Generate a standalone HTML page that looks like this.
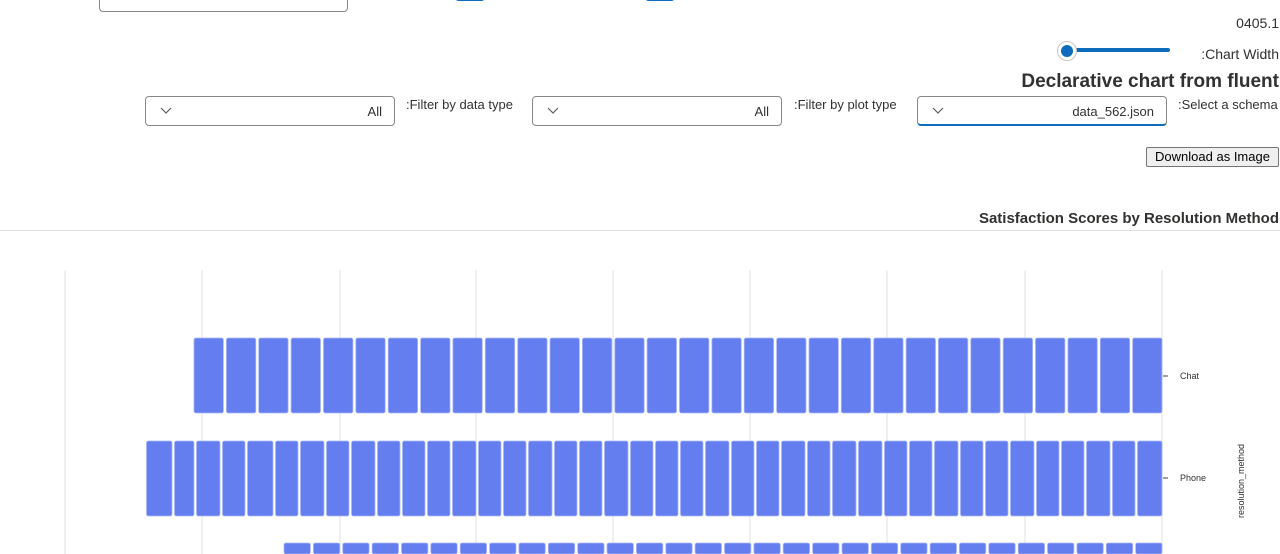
<!DOCTYPE html>
<html><head><meta charset="utf-8">
<style>
html,body{margin:0;padding:0;width:1280px;height:554px;overflow:hidden;background:#fff;font-family:"Segoe UI","Liberation Sans",sans-serif;color:#323130;}
.abs{position:absolute;}
.dd{position:absolute;height:30px;border:1px solid #8a8886;border-radius:4px;background:#fff;box-sizing:border-box;font-size:13px;}
.dd .v{position:absolute;right:12px;top:7px;}
.dd svg{position:absolute;left:14px;top:10px;}
.lbl{position:absolute;font-size:13px;}
</style></head><body>
<div class="dd" style="left:99px;top:-18px;width:249px;border-color:#8a8886"></div>
<div class="abs" style="left:455px;top:-6px;width:30px;height:7px;background:#0f6cbd;border-radius:4px"></div>
<div class="abs" style="left:645px;top:-6px;width:30px;height:7px;background:#0f6cbd;border-radius:4px"></div>

<div class="abs" style="right:1px;top:15px;font-size:14px;">0405.1</div>
<div class="abs" style="right:1px;top:46px;font-size:14px;">:Chart Width</div>
<div class="abs" style="left:1066px;top:48px;width:104px;height:4px;background:#0f6cbd;border-radius:2px"></div>
<div class="abs" style="left:1057px;top:41px;width:20px;height:20px;border-radius:50%;background:#fff;border:1px solid #c8c6c4;box-sizing:border-box"></div>
<div class="abs" style="left:1061px;top:45px;width:12px;height:12px;border-radius:50%;background:#0f6cbd"></div>
<div class="abs" style="right:1px;top:71px;font-size:19px;font-weight:600;">Declarative chart from fluent</div>

<div class="dd" style="left:145px;top:96px;width:250px"><svg width="12" height="8"><path d="M1 1l5 5 5-5" fill="none" stroke="#605e5c" stroke-width="1.2"/></svg><span class="v">All</span></div>
<div class="lbl" style="left:406px;top:97px">:Filter by data type</div>
<div class="dd" style="left:532px;top:96px;width:250px"><svg width="12" height="8"><path d="M1 1l5 5 5-5" fill="none" stroke="#605e5c" stroke-width="1.2"/></svg><span class="v">All</span></div>
<div class="lbl" style="left:794px;top:97px">:Filter by plot type</div>
<div class="dd" style="left:917px;top:96px;width:250px;border-bottom:2px solid #0f6cbd"><svg width="12" height="8"><path d="M1 1l5 5 5-5" fill="none" stroke="#605e5c" stroke-width="1.2"/></svg><span class="v">data_562.json</span></div>
<div class="lbl" style="left:1178px;top:97px">:Select a schema</div>

<div class="abs" style="left:1146px;top:147px;width:133px;height:20px;border:1px solid #767676;border-radius:2px;background:#efefef;box-sizing:border-box;font-family:Arial,'Liberation Sans',sans-serif;font-size:13px;color:#000;text-align:center;line-height:18px">Download as Image</div>
<div class="abs" style="right:1px;top:210px;font-size:15px;font-weight:600;color:#323130">Satisfaction Scores by Resolution Method</div>
<div class="abs" style="left:0;top:230px;width:1280px;height:1px;background:#e1dfdd"></div>

<svg class="abs" style="left:0;top:0" width="1280" height="554" id="ch">
<g stroke="#e0e0e0" stroke-width="1">
<line x1="65" y1="270" x2="65" y2="554"/><line x1="202" y1="270" x2="202" y2="554"/><line x1="340" y1="270" x2="340" y2="554"/><line x1="476" y1="270" x2="476" y2="554"/><line x1="613" y1="270" x2="613" y2="554"/><line x1="750" y1="270" x2="750" y2="554"/><line x1="887" y1="270" x2="887" y2="554"/><line x1="1025" y1="270" x2="1025" y2="554"/><line x1="1162" y1="270" x2="1162" y2="554"/>
</g>
<g stroke="#444" stroke-width="1"><line x1="1163" y1="376" x2="1168" y2="376"/><line x1="1163" y1="478" x2="1168" y2="478"/></g>
<g font-family="Liberation Sans,sans-serif" font-size="9" fill="#323130">
<text x="1180" y="379">Chat</text><text x="1180" y="481">Phone</text>
<text transform="translate(1244,481) rotate(-90)" text-anchor="middle">resolution_method</text>
</g>
<g id="bars" fill="#647ef0" stroke="#a8b6f5" stroke-width="0.8"></g>
</svg>
<script>
var g=document.getElementById('bars'),h='';
function row(x0,x1,n,y,hh){var p=(x1-x0)/n;for(var i=0;i<n;i++){h+='<rect x="'+(x0+i*p+1).toFixed(1)+'" y="'+y+'" width="'+(p-3).toFixed(1)+'" height="'+hh+'" rx="2"/>';}}
row(193,1164,30,338,75);
var ph=[146,174,196,222,247,275,300,326,351,377,402,427,452,478,503,528,554,579,604,630,655,680,705,731,756,781,807,832,858,884,909,934,960,985,1010,1036,1061,1086,1112,1137,1164];
for(var i=0;i<ph.length-1;i++){h+='<rect x="'+(ph[i]+0.5)+'" y="441" width="'+(ph[i+1]-ph[i]-2.5)+'" height="75" rx="2"/>';}
row(283,1164,30,543,11);
g.innerHTML=h;
</script>
</body></html>
